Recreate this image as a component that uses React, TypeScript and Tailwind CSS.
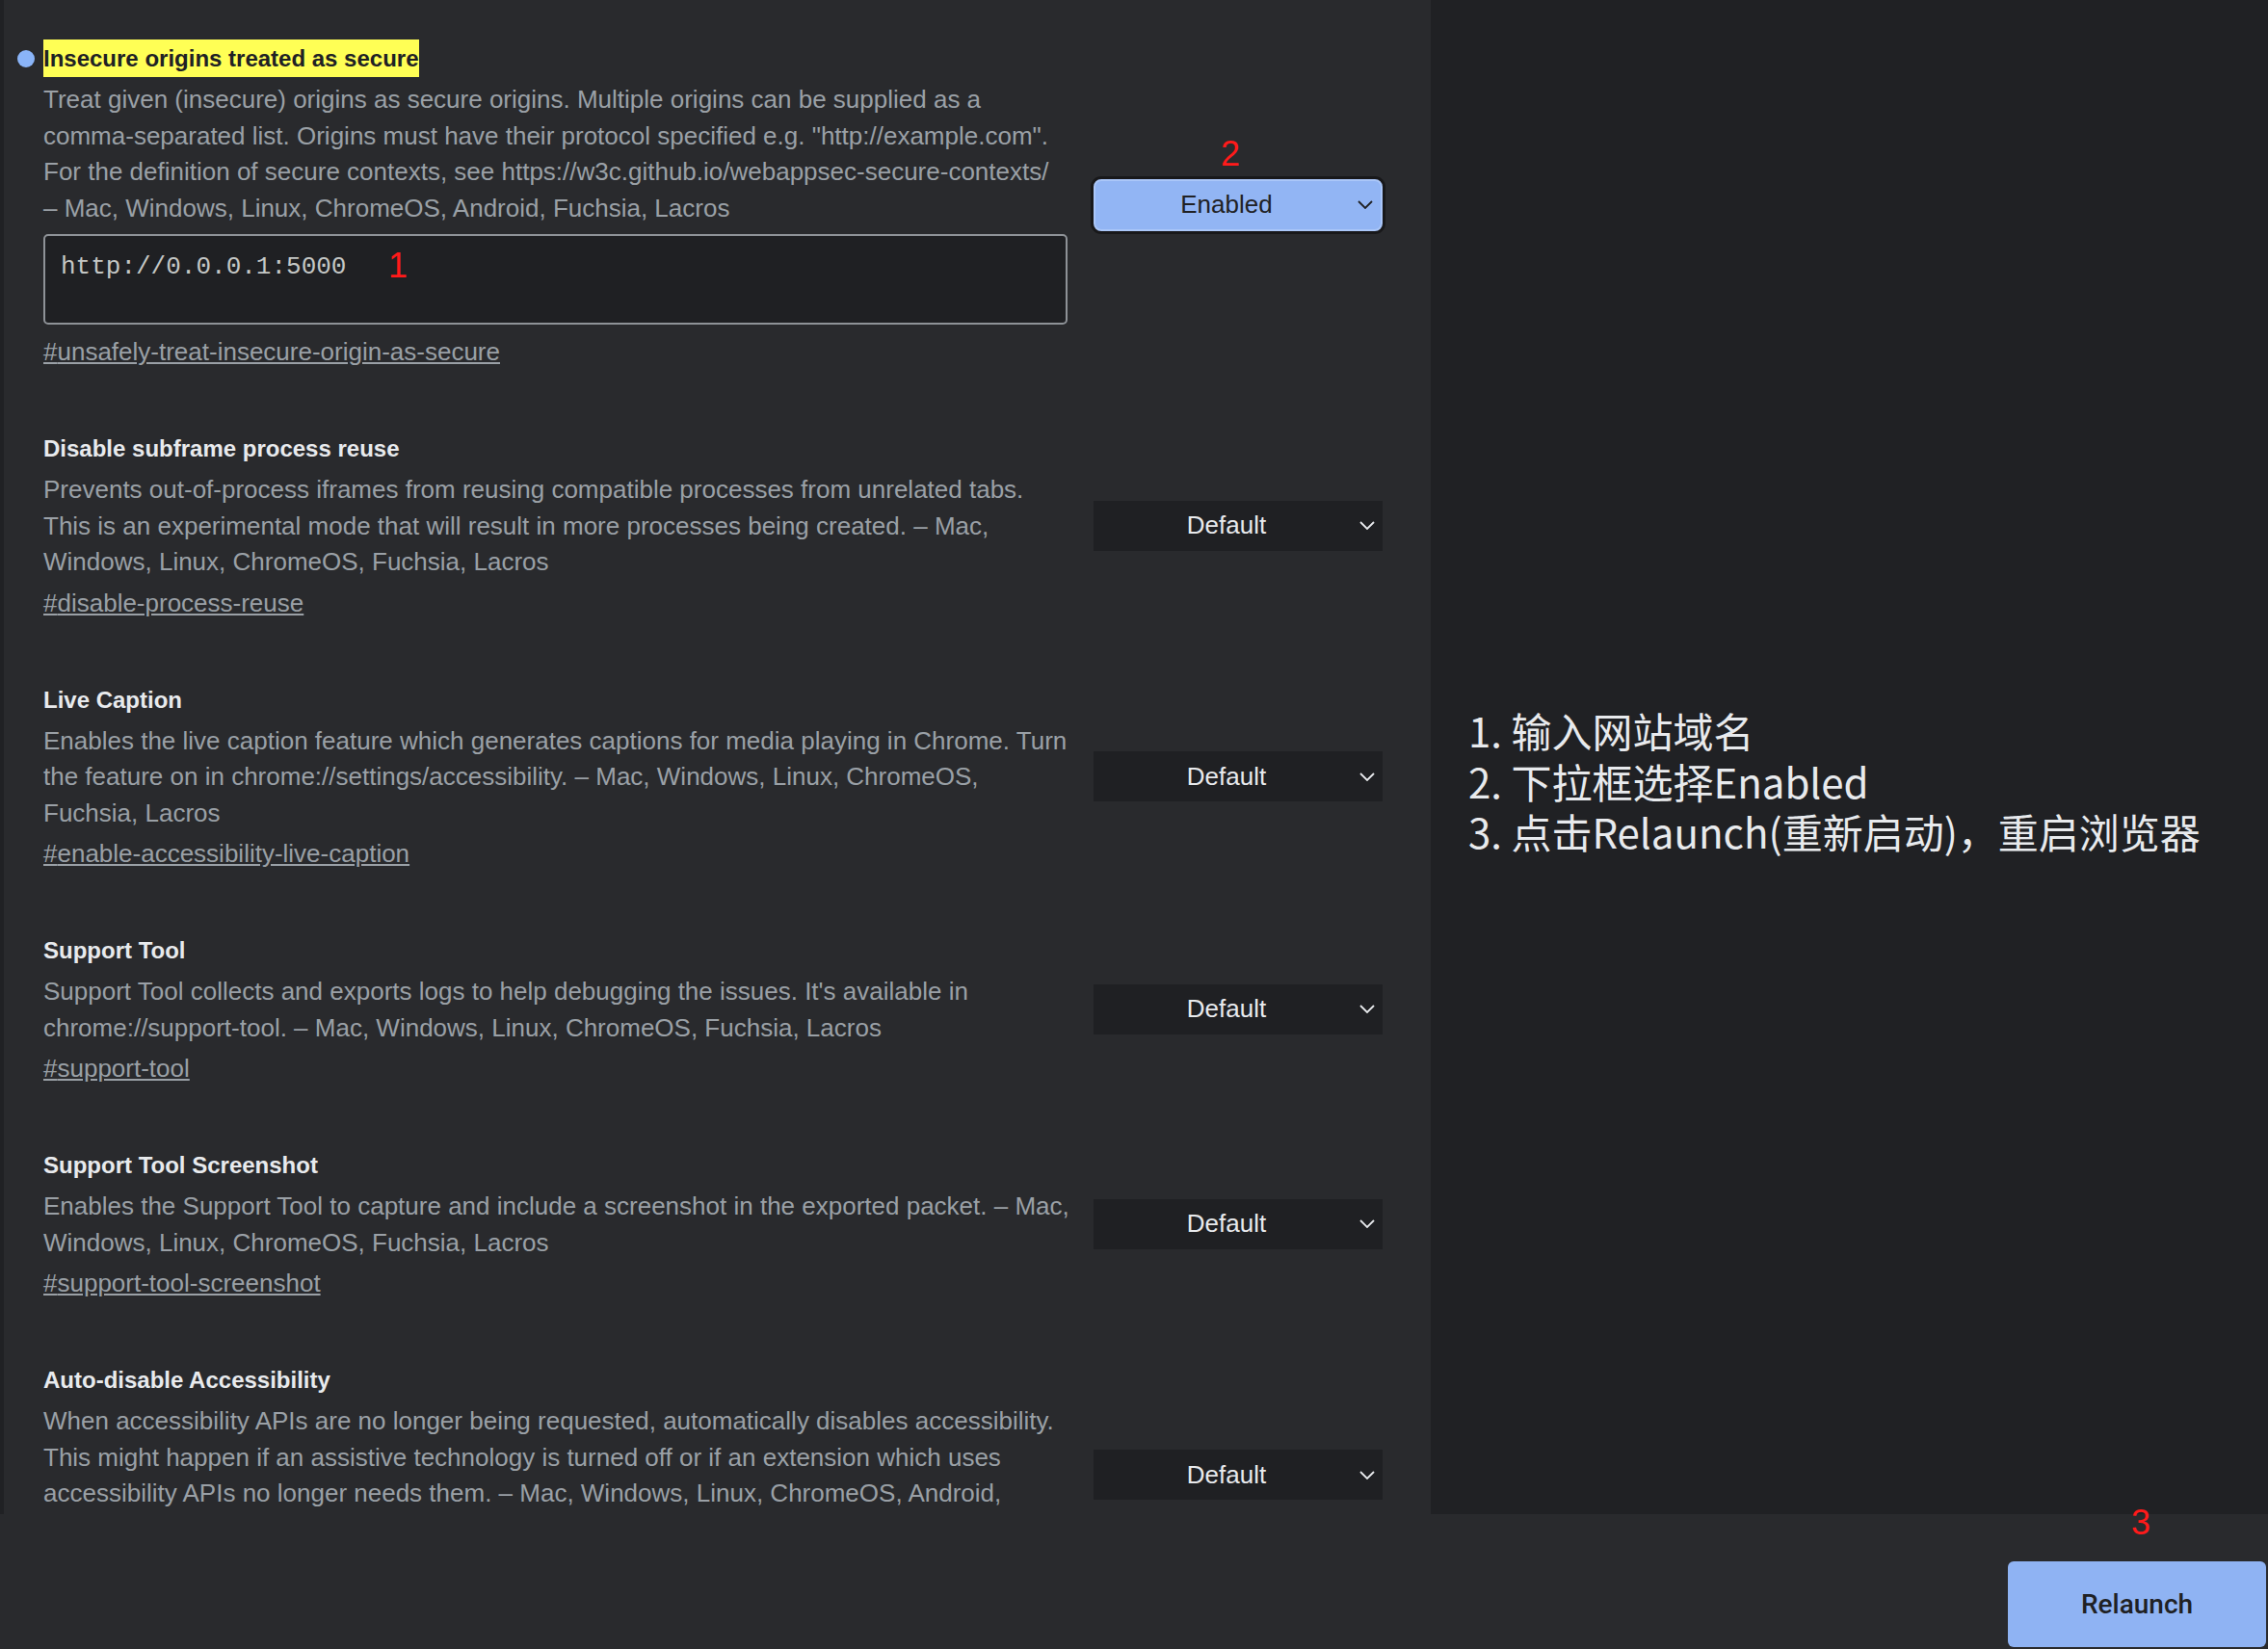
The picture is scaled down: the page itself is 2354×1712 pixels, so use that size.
type Flag = {
  name: string;
  lines: string[];
  id: string;
  value: 'Default' | 'Enabled';
  highlighted?: boolean;
  input?: string;
};

const flags: Flag[] = [
  {
    name: 'Insecure origins treated as secure',
    lines: [
      'Treat given (insecure) origins as secure origins. Multiple origins can be supplied as a',
      'comma-separated list. Origins must have their protocol specified e.g. "http://example.com".',
      'For the definition of secure contexts, see https://w3c.github.io/webappsec-secure-contexts/',
      '– Mac, Windows, Linux, ChromeOS, Android, Fuchsia, Lacros',
    ],
    id: 'unsafely-treat-insecure-origin-as-secure',
    value: 'Enabled',
    highlighted: true,
    input: 'http://0.0.0.1:5000',
  },
  {
    name: 'Disable subframe process reuse',
    lines: [
      'Prevents out-of-process iframes from reusing compatible processes from unrelated tabs.',
      'This is an experimental mode that will result in more processes being created. – Mac,',
      'Windows, Linux, ChromeOS, Fuchsia, Lacros',
    ],
    id: 'disable-process-reuse',
    value: 'Default',
  },
  {
    name: 'Live Caption',
    lines: [
      'Enables the live caption feature which generates captions for media playing in Chrome. Turn',
      'the feature on in chrome://settings/accessibility. – Mac, Windows, Linux, ChromeOS,',
      'Fuchsia, Lacros',
    ],
    id: 'enable-accessibility-live-caption',
    value: 'Default',
  },
  {
    name: 'Support Tool',
    lines: [
      "Support Tool collects and exports logs to help debugging the issues. It's available in",
      'chrome://support-tool. – Mac, Windows, Linux, ChromeOS, Fuchsia, Lacros',
    ],
    id: 'support-tool',
    value: 'Default',
  },
  {
    name: 'Support Tool Screenshot',
    lines: [
      'Enables the Support Tool to capture and include a screenshot in the exported packet. – Mac,',
      'Windows, Linux, ChromeOS, Fuchsia, Lacros',
    ],
    id: 'support-tool-screenshot',
    value: 'Default',
  },
  {
    name: 'Auto-disable Accessibility',
    lines: [
      'When accessibility APIs are no longer being requested, automatically disables accessibility.',
      'This might happen if an assistive technology is turned off or if an extension which uses',
      'accessibility APIs no longer needs them. – Mac, Windows, Linux, ChromeOS, Android,',
      'Fuchsia, Lacros',
    ],
    id: 'auto-disable-accessibility',
    value: 'Default',
  },
];

const sans = "font-['Liberation_Sans',Arial,sans-serif]";

function Chevron() {
  return (
    <svg width="16" height="9" viewBox="0 0 16 9" className="mr-[8px] shrink-0">
      <path d="M1 1l7 7 7-7" fill="none" stroke="currentColor" strokeWidth="1.8" />
    </svg>
  );
}

function FlagSelect({ value }: { value: Flag['value'] }) {
  if (value === 'Enabled') {
    return (
      <div className="relative shrink-0">
        <span className="absolute left-[132px] top-[-44px] font-['Liberation_Sans',sans-serif] text-[36px] leading-none text-[#ff1a1a]">
          2
        </span>
        <div className="flex h-[54px] w-[300px] items-center rounded-[8px] border-2 border-[#aac6f8] bg-[#92b5f4] text-[#202124] ring-[3px] ring-[#18181a]">
          <span className={`flex-1 text-center text-[26px] ${sans}`}>Enabled</span>
          <Chevron />
        </div>
      </div>
    );
  }
  return (
    <div className="flex h-[52px] w-[300px] shrink-0 items-center bg-[#1f2023] text-[#e8eaed]">
      <span className={`flex-1 text-center text-[26px] ${sans}`}>Default</span>
      <Chevron />
    </div>
  );
}

function FlagRow({ flag }: { flag: Flag }) {
  return (
    <div className="flex items-center gap-[27px]">
      <div className="w-[1063px] shrink-0">
        <div className="flex h-[39px] items-center">
          {flag.highlighted && (
            <span className="-ml-[27px] mr-[9px] h-[18px] w-[18px] shrink-0 rounded-full bg-[#8ab4f8]" />
          )}
          <span
            className={`text-[24px] font-bold leading-[39px] ${sans} ${
              flag.highlighted ? 'bg-[#ffff55] text-[#202124]' : 'text-[#e8eaed]'
            }`}
          >
            {flag.name}
          </span>
        </div>
        <div className={`mt-[5px] text-[26px] leading-[37.5px] text-[#9aa0a6] ${sans}`}>
          {flag.lines.map((line) => (
            <p key={line} className="w-fit whitespace-nowrap">
              {line}
            </p>
          ))}
        </div>
        {flag.input && (
          <div className="relative mt-[8px] h-[94px] rounded-[5px] border-2 border-[#8e9297] bg-[#1f2023] pl-[16px] pt-[13px]">
            <span className="font-['Liberation_Mono',monospace] text-[26px] text-[#c4c7c5]">{flag.input}</span>
            <span className="absolute left-[356px] top-[13px] font-['Liberation_Sans',sans-serif] text-[36px] leading-none text-[#ff1a1a]">
              1
            </span>
          </div>
        )}
        <a
          href={`#${flag.id}`}
          className={`block w-fit text-[26px] leading-[37.5px] text-[#9aa0a6] underline ${sans} ${
            flag.input ? 'mt-[10px]' : 'mt-[5px]'
          }`}
        >
          #{flag.id}
        </a>
      </div>
      <FlagSelect value={flag.value} />
    </div>
  );
}

export default function App() {
  return (
    <div className="flex h-screen w-full flex-col bg-[#292a2d]">
      <div className="flex min-h-0 flex-1">
        <main className="w-[1485px] shrink-0 overflow-hidden border-l-4 border-[#202124] bg-[#292a2d] pl-[41px] pt-[41px]">
          <div className="flex flex-col gap-[61.5px]">
            {flags.map((flag) => (
              <FlagRow key={flag.id} flag={flag} />
            ))}
          </div>
        </main>
        <aside className="flex-1 bg-[#202124] pl-[39px] pt-[732px] font-['Noto_Sans_CJK_SC',sans-serif] text-[42px] leading-[52.5px] text-[#e8eaed]">
          <p>1. 输入网站域名</p>
          <p>2. 下拉框选择Enabled</p>
          <p>3. 点击Relaunch(重新启动)，重启浏览器</p>
        </aside>
      </div>
      <footer className="flex h-[140px] shrink-0 items-end justify-end bg-[#292a2d] p-[2px]">
        <div className="relative">
          <span className="absolute left-[128px] top-[-58px] font-['Liberation_Sans',sans-serif] text-[36px] leading-none text-[#ff1a1a]">
            3
          </span>
          <button className="h-[89px] w-[268px] rounded-[6px] bg-[#8fb3f3] font-['Roboto',sans-serif] text-[28px] font-medium text-[#202124]">
            Relaunch
          </button>
        </div>
      </footer>
    </div>
  );
}
